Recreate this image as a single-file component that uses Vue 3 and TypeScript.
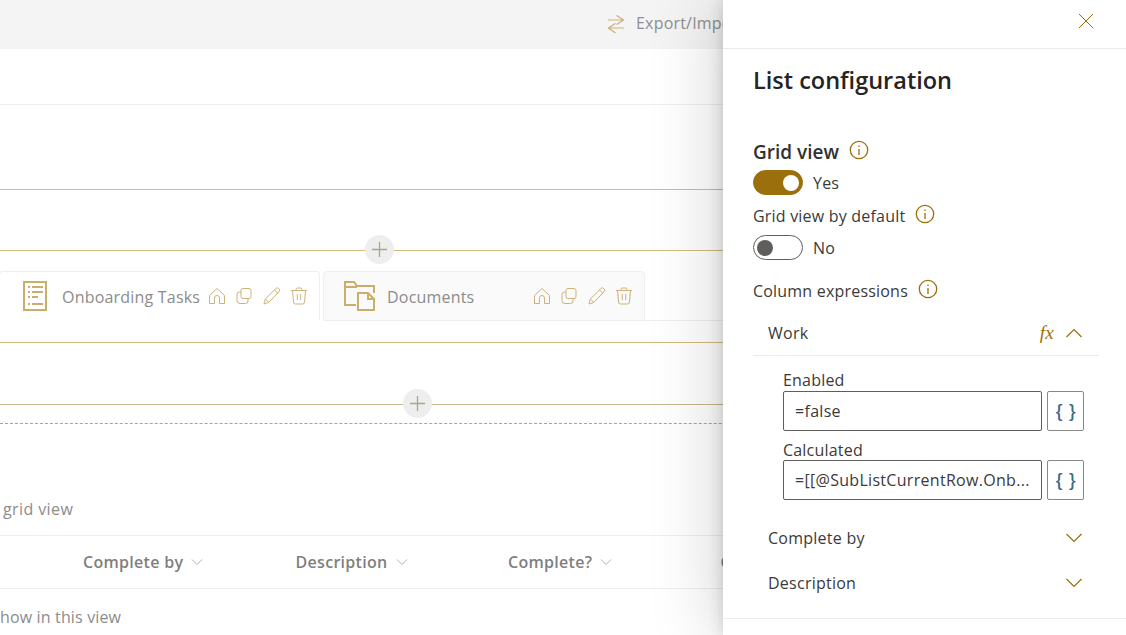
<script setup lang="ts">
const actions = ["home", "copy", "edit", "trash"];
const columns = ["Complete by", "Description", "Complete?"];
const tabs = [
  { name: "Onboarding Tasks", icon: "list", cls: "tab-first" },
  { name: "Documents", icon: "folder", cls: "tab-second" },
];
</script>

<template>
  <div class="page">
    <main class="content">
      <div class="topbar">
        <svg class="swap" viewBox="0 0 16 19" fill="none" stroke="currentColor" stroke-width="1.200">
          <path d="M0 5h15.500M8.500 0.500 15.500 5l-7 4.500M16 13H.5M7.500 8.500.5 13l7 5" />
        </svg>
        <span>Export/Import</span>
      </div>
      <div class="band-a"></div>
      <div class="band-b"></div>
      <div class="add-row add-gold">
        <button class="add" style="margin-left: 365px">
          <svg viewBox="0 0 16 16"><path d="M8 0v16M0 8h16" /></svg>
        </button>
      </div>
      <div class="tabs">
        <div v-for="t in tabs" :key="t.name" class="tab" :class="t.cls">
          <svg v-if="t.icon === 'list'" class="tab-icon" viewBox="0 0 24 32" fill="none" stroke="currentColor" stroke-width="2">
            <path d="M1 2h22v28H1z" />
            <path d="M5 7h2M9 7h11M5 12h2M9 12h11M5 17h2M9 17h6M5 24h2M9 24h11" />
          </svg>
          <svg v-else class="tab-icon folder" viewBox="0 0 32 30" fill="none" stroke="currentColor" stroke-width="2">
            <path d="M12 24H1V1h9l3 4h17v7M1 6h12" />
            <path d="M14 12h10l6 6v11H14zM24 12v6h6" />
          </svg>
          <span class="tab-name">{{ t.name }}</span>
          <div class="tab-actions">
            <svg v-for="a in actions" :key="a" viewBox="0 0 18 18" fill="none" stroke="currentColor" stroke-width="1">
              <path v-if="a === 'home'" d="M1.500 8.500 9 1.500l7.500 7v8h-5V11a2.500 2.500 0 0 0-5 0v5.500h-5z" />
              <path v-else-if="a === 'copy'" d="M6 3.500A2 2 0 0 1 8 1.500h6a2 2 0 0 1 2 2v6a2 2 0 0 1-2 2H8a2 2 0 0 1-2-2zM6 5H4.500a2.500 2.500 0 0 0-2.500 2.500v6A3 3 0 0 0 5 16.500h5.500a2.500 2.500 0 0 0 2.500-2.500v-2.500" />
              <path v-else-if="a === 'edit'" d="M1 17l1.300-5L12.800 1.600a2 2 0 0 1 3 0 2 2 0 0 1 .4 3L5.800 15.400zM2.300 12l3.500 3.400M11.500 3l3.500 3.400" />
              <path v-else d="M1 3.500h16M6 3.500V2.500a1.500 1.500 0 0 1 1.500-1.500h3A1.500 1.500 0 0 1 12 2.500v1M2.500 3.500l1 11.500a2 2 0 0 0 2 2h7a2 2 0 0 0 2-2l1-11.500M7.300 7v6M10.700 7v6" />
            </svg>
          </div>
        </div>
        <div class="tabs-rest"></div>
      </div>
      <div class="band-c"></div>
      <div class="add-row add-grey">
        <button class="add" style="margin-left: 403px">
          <svg viewBox="0 0 16 16"><path d="M8 0v16M0 8h16" /></svg>
        </button>
      </div>
      <div class="dashed"></div>
      <div class="grid-note">grid view</div>
      <div class="col-head">
        <div v-for="c in columns" :key="c" class="col">
          <span>{{ c }}</span>
          <svg viewBox="0 0 12 12" fill="none" stroke="currentColor" stroke-width="1"><path d="M1 3.500 6 8.500l5-5" /></svg>
        </div>
        <div class="col col-cut">C</div>
      </div>
      <div class="empty">how in this view</div>
    </main>

    <aside class="panel">
      <header class="panel-top">
        <svg viewBox="0 0 16 16" fill="none" stroke="currentColor" stroke-width="1"><path d="M1 1l14 14M15 1 1 15" /></svg>
      </header>
      <h1>List configuration</h1>

      <div class="lbl lbl-strong">
        Grid view
        <svg class="info" viewBox="0 0 20 20" fill="none" stroke="currentColor" stroke-width="1.300"><circle cx="10" cy="10" r="8.700" /><path d="M10 9v6M10 5.500v1.600" /></svg>
      </div>
      <div class="toggle-row row-yes">
        <span class="toggle on"><i></i></span><span>Yes</span>
      </div>
      <div class="lbl lbl-default">
        Grid view by default
        <svg class="info" viewBox="0 0 20 20" fill="none" stroke="currentColor" stroke-width="1.300"><circle cx="10" cy="10" r="8.700" /><path d="M10 9v6M10 5.500v1.600" /></svg>
      </div>
      <div class="toggle-row row-no">
        <span class="toggle"><i></i></span><span>No</span>
      </div>
      <div class="lbl lbl-cols">
        Column expressions
        <svg class="info" viewBox="0 0 20 20" fill="none" stroke="currentColor" stroke-width="1.300"><circle cx="10" cy="10" r="8.700" /><path d="M10 9v6M10 5.500v1.600" /></svg>
      </div>

      <div class="acc acc-open">
        <span>Work</span>
        <em>fx</em>
        <svg viewBox="0 0 16 10" fill="none" stroke="currentColor" stroke-width="1.200"><path d="M.5 9 8 1.500 15.500 9" /></svg>
      </div>
      <div class="fields">
        <label>Enabled</label>
        <div class="field">
          <div class="input">=false</div>
          <div class="braces"><b>{</b><b>}</b></div>
        </div>
        <label class="second">Calculated</label>
        <div class="field">
          <div class="input">=[[@SubListCurrentRow.Onb...</div>
          <div class="braces"><b>{</b><b>}</b></div>
        </div>
      </div>
      <div class="acc acc-first">
        <span>Complete by</span>
        <svg viewBox="0 0 16 10" fill="none" stroke="currentColor" stroke-width="1.200"><path d="M.5 1 8 8.500 15.500 1" /></svg>
      </div>
      <div class="acc">
        <span>Description</span>
        <svg viewBox="0 0 16 10" fill="none" stroke="currentColor" stroke-width="1.200"><path d="M.5 1 8 8.500 15.500 1" /></svg>
      </div>
      <div class="panel-foot"></div>
    </aside>
  </div>
</template>

<style>
html,
body {
  margin: 0;
  background: #fff;
}
</style>

<style scoped>
.page {
  position: relative;
  width: 1126px;
  height: 635px;
  overflow: hidden;
  background: #fff;
  font-family: "Open Sans", "Noto Sans", sans-serif;
  font-size: 16px;
  color: #3b3a39;
}
.content {
  width: 100%;
}
.topbar {
  height: 49px;
  background: #f4f4f4;
  display: flex;
  align-items: center;
  padding: 0 0 4px 608px;
  gap: 12px;
  color: #8f8f8f;
  letter-spacing: 0.2px;
  white-space: nowrap;
  box-sizing: border-box;
}
.swap {
  width: 16px;
  height: 19px;
  color: #cdb27a;
  margin-top: 3px;
}
.band-a {
  height: 55px;
  border-bottom: 1px solid #eeeeee;
}
.band-b {
  height: 84px;
  border-bottom: 1px solid #bdbdb3;
}
.add-row {
  position: relative;
  height: 29px;
  display: flex;
  align-items: center;
}
.add-row::before {
  content: "";
  position: absolute;
  left: 0;
  right: 0;
  top: 14px;
  height: 1px;
}
.add-gold {
  margin-top: 46px;
}
.add-gold::before {
  background: #d2bb7e;
}
.add-grey {
  margin-top: 47px;
}
.add-grey::before {
  background: #c8b88e;
}
.add {
  position: relative;
  top: -1px;
  width: 29px;
  height: 29px;
  border: 0;
  border-radius: 50%;
  background: #eeeeee;
  padding: 7px;
  box-sizing: border-box;
}
.add svg {
  display: block;
  width: 15px;
  height: 15px;
  fill: none;
  stroke: #aaa58f;
  stroke-width: 1.400;
}
.tabs {
  display: flex;
  align-items: stretch;
  height: 50px;
  margin-top: 6px;
}
.tab {
  display: flex;
  align-items: center;
  box-sizing: border-box;
  height: 50px;
  border: 1px solid #eeeeee;
  border-radius: 4px 4px 0 0;
  color: #cdb27a;
}
.tab-first {
  width: 321px;
  margin-left: -1px;
  padding-left: 23px;
  background: #fff;
  border-bottom-color: #fff;
}
.tab-second {
  width: 322px;
  margin-left: 3px;
  padding-left: 20px;
  background: #fafafa;
}
.tab-icon {
  width: 24px;
  height: 32px;
  flex: none;
  color: #c9ae6c;
}
.folder {
  width: 32px;
  height: 30px;
}
.tab-name {
  margin-left: 15px;
  padding-top: 1px;
  color: #8c8c8c;
  letter-spacing: 0.2px;
  white-space: nowrap;
}
.folder + .tab-name {
  margin-left: 11px;
}
.tab-actions {
  margin-left: auto;
  margin-right: 11px;
  display: flex;
  gap: 9.500px;
}
.tab-actions svg {
  width: 18px;
  height: 18px;
}
.tabs-rest {
  flex: 1;
  border-bottom: 1px solid #eeeeee;
}
.band-c {
  height: 21px;
  border-bottom: 1px solid #d2bb7e;
}
.dashed {
  height: 4px;
  border-bottom: 1px dashed #86b88a;
}
.grid-note {
  height: 26px;
  margin-top: 72px;
  padding-left: 3px;
  line-height: 26px;
  color: #8c8c8c;
  letter-spacing: 0.4px;
}
.col-head {
  box-sizing: border-box;
  height: 54px;
  margin-top: 13px;
  border-top: 1px solid #eeeeee;
  border-bottom: 1px solid #eeeeee;
  display: flex;
  align-items: center;
  padding-left: 83px;
  color: #7f7f7f;
  font-weight: 600;
  letter-spacing: 0.3px;
}
.col {
  width: 212.500px;
  display: flex;
  align-items: center;
  gap: 8px;
  white-space: nowrap;
}
.col svg {
  width: 12px;
  height: 12px;
  color: #b0b0b0;
}
.col-cut {
  color: #7f7f7f;
}
.empty {
  height: 46px;
  line-height: 56px;
  color: #8c8c8c;
  letter-spacing: 0.15px;
}
.panel {
  position: absolute;
  top: 0;
  right: 0;
  bottom: 0;
  width: 403px;
  background: #fff;
  box-shadow: 0 0 70px rgba(0, 0, 0, 0.2), 0 0 14px rgba(0, 0, 0, 0.16);
  display: flex;
  flex-direction: column;
}
.panel-top {
  flex: none;
  height: 49px;
  box-sizing: border-box;
  border-bottom: 1px solid #edebe9;
  display: flex;
  justify-content: flex-end;
  align-items: center;
  padding: 0 32px 6px 0;
  color: #9b6f0b;
}
.panel-top svg {
  width: 16px;
  height: 16px;
}
h1 {
  flex: none;
  margin: 14px 0 0 30px;
  height: 34px;
  line-height: 34px;
  font-size: 23.500px;
  font-weight: 600;
  color: #252423;
}
.lbl {
  flex: none;
  display: flex;
  align-items: center;
  margin-left: 30px;
  height: 24px;
  letter-spacing: 0.2px;
}
.lbl-strong {
  margin-top: 43px;
  font-size: 19px;
  font-weight: 600;
  letter-spacing: 0;
  color: #323130;
}
.lbl-default {
  margin-top: 9px;
}
.lbl-cols {
  margin-top: 19px;
}
.info {
  width: 20px;
  height: 20px;
  color: #9b6f0b;
  margin-left: 10px;
  margin-top: -4px;
}
.toggle-row {
  flex: none;
  display: flex;
  align-items: center;
  gap: 10px;
  margin-left: 30px;
  height: 25px;
  letter-spacing: 0.2px;
}
.row-yes {
  margin-top: 6px;
}
.row-no {
  margin-top: 7px;
}
.toggle {
  box-sizing: border-box;
  position: relative;
  width: 50px;
  height: 25px;
  border: 1px solid #605e5c;
  border-radius: 13px;
  background: #fff;
}
.toggle i {
  position: absolute;
  left: 3px;
  top: 3.500px;
  width: 16px;
  height: 16px;
  border-radius: 50%;
  background: #605e5c;
}
.toggle.on {
  background: #9b6f0b;
  border-color: #9b6f0b;
}
.toggle.on i {
  left: auto;
  right: 3px;
  background: #fff;
}
.acc {
  flex: none;
  box-sizing: border-box;
  height: 45px;
  display: flex;
  align-items: center;
  margin: 0 27px 0 30px;
  padding: 0 17px 0 15px;
  letter-spacing: 0.25px;
}
.acc span {
  flex: 1;
}
.acc svg {
  width: 16px;
  height: 10px;
  color: #9b6f0b;
}
.acc em {
  font-family: "Liberation Serif", serif;
  font-size: 19px;
  color: #9b6f0b;
  margin-right: 12px;
}
.acc-open {
  margin-top: 9px;
  height: 44px;
  border-bottom: 1px solid #edebe9;
  padding-bottom: 1px;
}
.acc-first {
  margin-top: 15px;
}
.fields {
  flex: none;
  padding: 14px 42px 0 60px;
}
.fields label {
  display: block;
  height: 21px;
  line-height: 20px;
  letter-spacing: 0.2px;
}
.fields .second {
  height: 20px;
  margin-top: 9px;
}
.field {
  display: flex;
  gap: 5px;
  height: 40px;
}
.input,
.braces {
  box-sizing: border-box;
  height: 40px;
  border: 1px solid #605e5c;
  border-radius: 2px;
  display: flex;
  align-items: center;
}
.input {
  width: 259px;
  padding-left: 11px;
  letter-spacing: 0.3px;
  white-space: nowrap;
  overflow: hidden;
}
.braces {
  width: 37px;
  justify-content: center;
  gap: 7px;
  border-color: #8a8886;
  font-family: "Liberation Sans", sans-serif;
  font-size: 19px;
}
.braces b {
  font-weight: 400;
  color: #2f6f9f;
  text-shadow: 0.6px 0 #d69a35;
}
.panel-foot {
  flex: none;
  margin-top: 13px;
  border-top: 1px solid #edebe9;
}
</style>
